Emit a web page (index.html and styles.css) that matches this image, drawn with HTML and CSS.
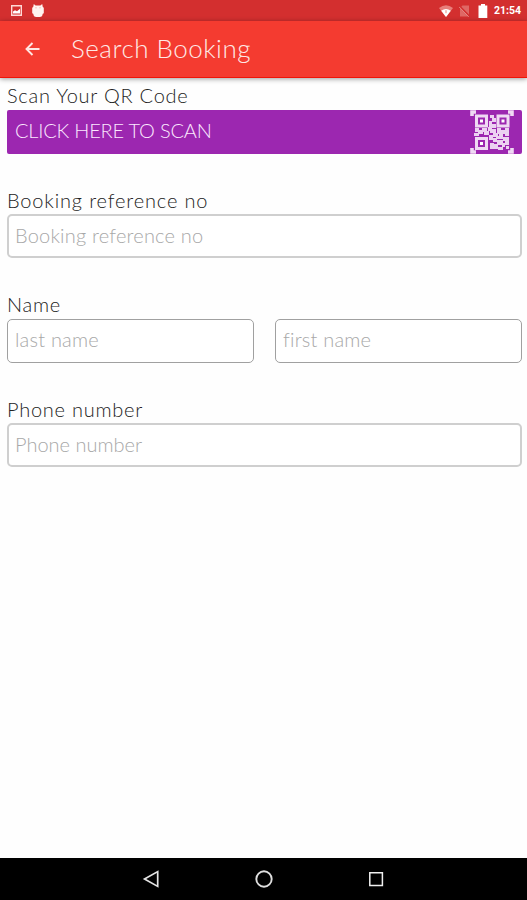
FILE: index.html
```
<!DOCTYPE html>
<html lang="en">
<head>
    <meta charset="UTF-8">
    <meta name="viewport" content="width=device-width, initial-scale=1.0">
    <title>Search Booking</title>
    <link rel="stylesheet" href="styles.css">
</head>
<body>
    <div class="status-bar">
        <div class="status-left">
            <svg width="11" height="11" viewBox="0 0 11 11">
                <path d="M0 0h11v11H0zM1.4 1.4v8.2h8.2V1.4z" fill="#ffd9d6" fill-rule="evenodd"/>
                <path d="M2 8.6V6.5l2-1.3 2 1 3-2.4v4.8z" fill="#fff"/>
            </svg>
            <svg width="12" height="13" viewBox="0 0 12 13">
                <path d="M1.8 0l1.8 1.5h4.8L10.2 0l.6 3 1 .8v5.4l-1 .6-.8 2.4-2 .8H4l-2-.8-.8-2.4-1-.6V3.8l1-.8z" fill="#fff3f0"/>
                <path d="M3.5 3.8h1M7.5 3.8h1" stroke="#eba09a"/>
            </svg>
        </div>
        <div class="status-right">
            <svg class="wifi" width="14" height="12" viewBox="0 0 14 12">
                <path d="M0 3Q7-2.5 14 3L7 12z" fill="#e87f7b"/>
                <path d="M2.2 5.8Q7 2.2 11.8 5.8L7 12z" fill="#fff"/>
                <path d="M7 5.2v3" stroke="#e98782"/>
            </svg>
            <svg class="no-sim" width="11" height="12" viewBox="0 0 11 12">
                <path d="M3.5.5H10v11H1V3z" fill="#df6865"/>
                <path d="M0 .7l10.8 11" stroke="#d32f2f" stroke-width="2"/>
                <path d="M0 1.8l9.7 10" stroke="#e58a86"/>
            </svg>
            <svg class="battery" width="10" height="14" viewBox="0 0 10 14">
                <path d="M3 0h4v1.5h2.3V14H.5V1.5H3z" fill="#fff"/>
            </svg>
            <span class="clock">21:54</span>
        </div>
    </div>

    <header class="app-bar">
        <svg class="back" width="15" height="14" viewBox="0 0 15 14">
            <path d="M14.5 7H1.8M7.5 1L1.5 7l6 6" fill="none" stroke="#ffe6e2" stroke-width="1.9"/>
        </svg>
        <h1>Search Booking</h1>
    </header>

    <main class="form">
        <section class="group">
            <label class="label-scan">Scan Your QR Code</label>
            <button class="scan" type="button">
                <span>CLICK HERE TO SCAN</span>
                <svg width="44" height="44" viewBox="0 0 44 44">
                    <g fill="none" stroke="#efd9f3" stroke-width="3.6">
                        <path d="M2 6V2h4M38 2h4v4M2 38v4h4M38 42h4v-4"/>
                        <path d="M6.5 6h10v10h-10zM28 6h10v10H28zM6.5 28.5h10v10h-10z" stroke-width="3"/>
                    </g>
                    <path d="M10 9.5h3v3h-3zM31.5 9.5h3v3h-3zM10 32h3v3h-3z" fill="#fff"/>
                    <path d="M20 5h4v3h-4zM22 8h4v4h-4zM19 11h3v6h-3zM21 14h5v4h-5zM5 18h4v4H5zM8 20h5v4H8zM12 18h5v4h-5zM14 21h5v4h-5zM18 17h4v4h-4zM20 19h6v4h-6zM19 25h4v5h-4zM23 23h5v4h-5zM27 18h4v6h-4zM30 20h6v4h-6zM35 18h4v5h-4zM29 24h4v5h-4zM33 27h6v4h-6zM23 28h4v4h-4zM27 30h6v5h-6zM20 33h4v6h-4zM24 34h4v5h-4zM28 37h5v3h-5zM32 33h3v4h-3zM35 30h4v5h-4zM36 36h3v3h-3zM35 23h4v3h-4zM26 26h3v3h-3zM4 23h5v3H4z" fill="#ecd2f1"/>
                </svg>
            </button>
        </section>

        <section class="group">
            <label class="label-reference" for="reference">Booking reference no</label>
            <input class="field field-reference" id="reference" type="text" placeholder="Booking reference no">
        </section>

        <section class="group">
            <label class="label-name" for="lastName">Name</label>
            <div class="name-row">
                <input class="field field-name" id="lastName" type="text" placeholder="last name">
                <input class="field field-name" id="firstName" type="text" placeholder="first name">
            </div>
        </section>

        <section class="group">
            <label class="label-phone" for="phone">Phone number</label>
            <input class="field field-phone" id="phone" type="tel" placeholder="Phone number">
        </section>
    </main>

    <nav class="nav-bar">
        <svg width="18" height="20" viewBox="0 0 18 20">
            <path d="M15.7 2.6v14.8L2.5 10z" fill="none" stroke="#e4e4e4" stroke-width="1.7"/>
        </svg>
        <svg width="18" height="18" viewBox="0 0 18 18">
            <circle cx="9" cy="9" r="7.7" fill="none" stroke="#dedede" stroke-width="1.9"/>
        </svg>
        <svg width="16" height="16" viewBox="0 0 16 16">
            <path d="M1.8 1.8h12.6v12.6H1.8z" fill="none" stroke="#f0f0f0" stroke-width="1.5"/>
        </svg>
    </nav>
</body>
</html>
```

FILE: styles.css
```
* {
    box-sizing: border-box;
}

body {
    margin: 0;
    height: 100vh;
    display: flex;
    flex-direction: column;
    overflow: hidden;
    background: #fefefe;
    color: #222;
    font-family: Lato, "Open Sans", sans-serif;
    font-weight: 300;
}

svg {
    display: block;
    flex: none;
}

.status-bar {
    height: 21px;
    flex: none;
    display: flex;
    align-items: center;
    justify-content: space-between;
    padding: 0 6px 0 11px;
    background: #d32f2f;
}

.status-left,
.status-right {
    display: flex;
    align-items: center;
}

.status-left {
    gap: 10px;
}

.wifi {
    margin-right: 6px;
}

.no-sim {
    margin-right: 8px;
}

.battery {
    margin-right: 6px;
}

.clock {
    width: 27px;
    color: #fff;
    font: bold 10.5px/20px Roboto, sans-serif;
    white-space: nowrap;
}

.app-bar {
    height: 57px;
    flex: none;
    display: flex;
    align-items: center;
    padding: 0 25px;
    background: #f43b30;
    border-bottom: 1px solid #f01408;
    box-shadow: 0 1px 5px rgba(0, 0, 0, 0.4);
}

.app-bar h1 {
    margin: 0 0 2px 31px;
    color: #ffe9e6;
    font-size: 26px;
    font-weight: 300;
    line-height: 36px;
    letter-spacing: 0.5px;
    white-space: nowrap;
}

.form {
    flex: 1;
    padding: 5px 5px 0 7px;
}

.group {
    height: 104.5px;
}

.group label {
    display: block;
    height: 26.5px;
    font-size: 20px;
    line-height: 25px;
    letter-spacing: 0.75px;
    white-space: nowrap;
}

.group .label-reference {
    letter-spacing: 0.85px;
}

.scan {
    width: 100%;
    height: 44px;
    display: flex;
    align-items: center;
    justify-content: space-between;
    padding: 0 8px;
    border: none;
    border-radius: 2px;
    background: #9c27b0;
    color: #fbe9ff;
    font: inherit;
    font-size: 20px;
    letter-spacing: -0.2px;
    cursor: pointer;
}

.scan span {
    padding-bottom: 3px;
}

.field {
    display: block;
    width: 100%;
    height: 44px;
    padding: 0 6px 3px;
    border: 2px solid #cfcfcf;
    border-radius: 5px;
    background: #fff;
    color: #222;
    font: inherit;
    font-size: 20px;
    letter-spacing: 0.2px;
    outline: none;
}

.field::placeholder {
    color: #a8a8a8;
    opacity: 1;
}

.field-name {
    border: 1px solid #a0a0a0;
    padding: 0 7px 3px;
}

.field-phone {
    letter-spacing: 0;
}

.name-row {
    display: flex;
    gap: 21px;
}

.nav-bar {
    height: 42px;
    flex: none;
    display: flex;
    align-items: center;
    justify-content: space-between;
    padding: 0 143px 0 142px;
    background: #000;
}
```
